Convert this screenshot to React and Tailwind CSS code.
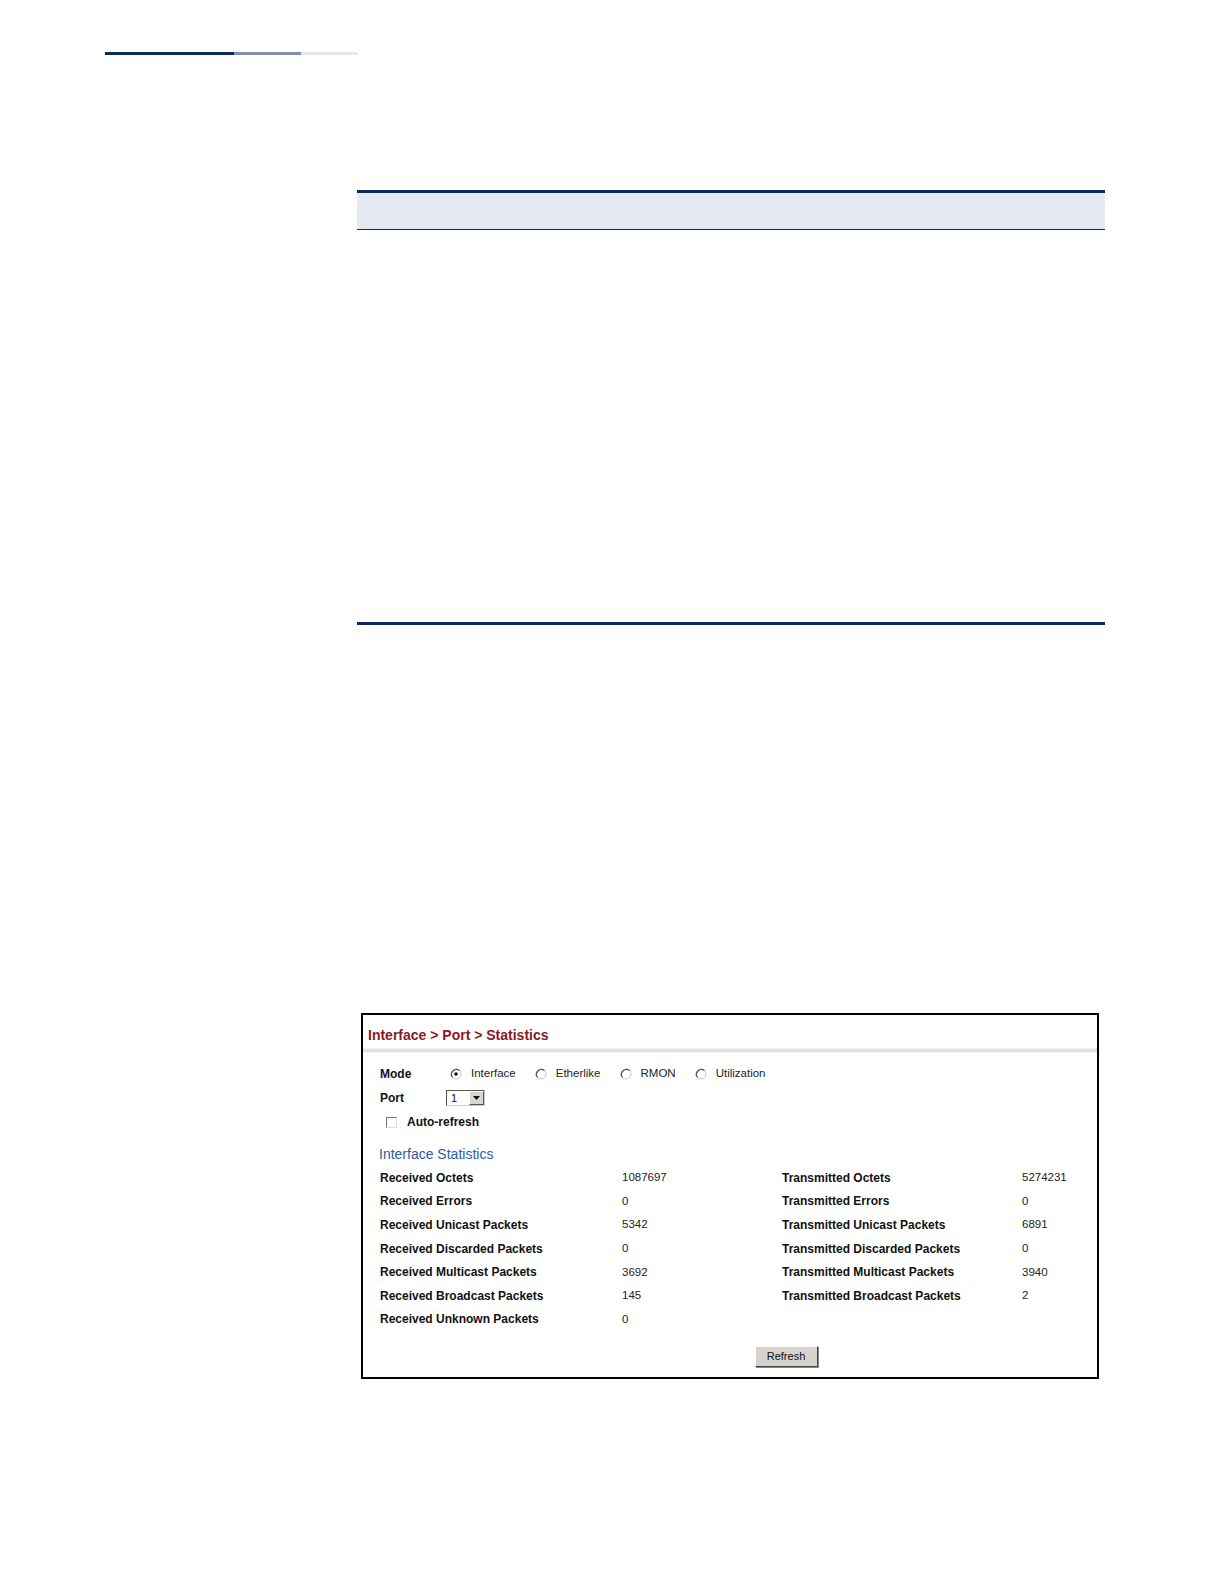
import React from "react";

const font = { fontFamily: '"Liberation Sans", Arial, sans-serif' };

const rxRows = [
  ["Received Octets", "1087697", "Transmitted Octets", "5274231"],
  ["Received Errors", "0", "Transmitted Errors", "0"],
  ["Received Unicast Packets", "5342", "Transmitted Unicast Packets", "6891"],
  ["Received Discarded Packets", "0", "Transmitted Discarded Packets", "0"],
  ["Received Multicast Packets", "3692", "Transmitted Multicast Packets", "3940"],
  ["Received Broadcast Packets", "145", "Transmitted Broadcast Packets", "2"],
  ["Received Unknown Packets", "0", "", ""],
];

function Radio({ checked }) {
  return (
    <svg width="12" height="12" viewBox="0 0 12 12" className="shrink-0">
      <circle cx="6" cy="6" r="5" fill="#fff" stroke="#c8c8c8" strokeWidth="1" />
      <path d="M2.5 9.5 A5 5 0 0 1 9.5 2.5" fill="none" stroke="#555" strokeWidth="1.2" />
      {checked && <circle cx="6" cy="6" r="1.8" fill="#111" />}
    </svg>
  );
}

function ModeOption({ label, checked }) {
  return (
    <div className="flex items-center gap-[9px] mr-[19px]">
      <Radio checked={checked} />
      <span className="text-[11.5px] text-[#222]">{label}</span>
    </div>
  );
}

export default function App() {
  return (
    <div className="bg-white w-[1224px] min-h-[1584px] overflow-hidden" style={font}>
      {/* header rule */}
      <div className="pt-[52px] pl-[105px] flex">
        <div className="h-[3px] w-[129px] bg-[#0b2b5f]" />
        <div className="h-[3px] w-[67px] bg-[#8190b0]" />
        <div className="h-[3px] w-[57px] bg-[#e6e8ee]" />
      </div>

      {/* empty table block */}
      <div className="ml-[357px] w-[748px] mt-[135px]">
        <div className="h-[3px] bg-[#0b2b5f]" />
        <div className="h-[37px] bg-[#e5e9f0] border-b border-[#0b2b5f]" />
        <div className="h-[392px]" />
        <div className="h-[3px] bg-[#0b2b5f]" />
      </div>

      {/* screenshot frame */}
      <div className="ml-[361px] mt-[388px] w-[738px] border-2 border-black bg-white">
        <div className="h-[33px] flex items-end pb-[2px] pl-[5px]">
          <span className="text-[14px] font-bold text-[#8a1a1f]">
            Interface &gt; Port &gt; Statistics
          </span>
        </div>
        <div className="h-[5px] bg-gradient-to-b from-[#f4f4f4] via-[#dcdcdc] to-[#f7f7f7]" />

        <div className="pl-[17px] pt-[9px]">
          <div className="h-[24px] flex items-center">
            <span className="w-[70px] text-[12px] font-bold text-[#111]">Mode</span>
            <ModeOption label="Interface" checked />
            <ModeOption label="Etherlike" />
            <ModeOption label="RMON" />
            <ModeOption label="Utilization" />
          </div>
          <div className="h-[24px] flex items-center">
            <span className="w-[66px] text-[12px] font-bold text-[#111]">Port</span>
            <div className="w-[39px] h-[16px] flex bg-white border border-t-[#555] border-l-[#555] border-r-[#ccc] border-b-[#ccc]">
              <span className="flex-1 text-[11px] leading-[14px] pl-[4px] text-[#111]">1</span>
              <div className="w-[15px] h-[14px] bg-[#d8d6d0] border border-t-[#fff] border-l-[#fff] border-r-[#555] border-b-[#555] flex items-center justify-center">
                <svg width="7" height="4" viewBox="0 0 7 4">
                  <path d="M0 0 H7 L3.5 4 Z" fill="#111" />
                </svg>
              </div>
            </div>
          </div>
          <div className="h-[24px] flex items-center">
            <div className="ml-[6px] w-[11px] h-[11px] bg-white border border-t-[#777] border-l-[#777] border-r-[#ddd] border-b-[#ddd]" />
            <span className="ml-[10px] text-[12px] font-bold text-[#111]">Auto-refresh</span>
          </div>

          <div className="h-[24px] mt-[8px] flex items-center">
            <span className="-ml-[1px] text-[14px] text-[#2e5aa7]">Interface Statistics</span>
          </div>

          <div className="grid grid-cols-[242px_160px_240px_1fr]">
            {rxRows.map((r, i) => (
              <React.Fragment key={i}>
                <div className="h-[23.6px] flex items-center text-[12px] font-bold text-[#111]">{r[0]}</div>
                <div className="h-[23.6px] flex items-center text-[11.5px] text-[#222]">{r[1]}</div>
                <div className="h-[23.6px] flex items-center text-[12px] font-bold text-[#111]">{r[2]}</div>
                <div className="h-[23.6px] flex items-center text-[11.5px] text-[#222]">{r[3]}</div>
              </React.Fragment>
            ))}
          </div>
        </div>

        <div className="flex justify-center pt-[15px] pb-[10px] pl-[112px]">
          <button className="w-[63px] h-[21px] bg-[#d6d3ce] text-[11px] text-[#111] border border-t-[#fff] border-l-[#fff] border-r-[#444] border-b-[#444] shadow-[1px_1px_0_#888]">
            Refresh
          </button>
        </div>
      </div>
    </div>
  );
}
